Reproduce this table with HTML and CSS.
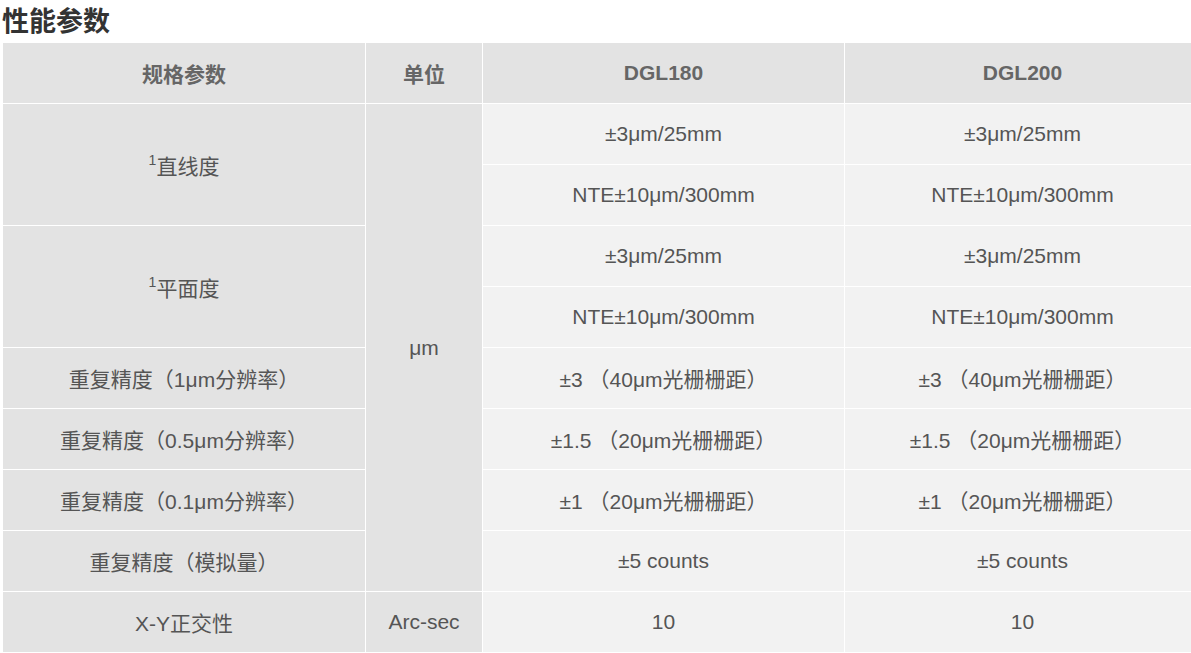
FILE: index.html
```html
<!DOCTYPE html>
<html lang="zh-CN">
<head>
<meta charset="utf-8">
<title>性能参数</title>
<link rel="stylesheet" href="styles.css">
</head>
<body>
<div class="page">
  <h2 class="title">性能参数</h2>
  <table class="spec">
    <colgroup>
      <col class="c1"><col class="c2"><col class="c3"><col class="c4">
    </colgroup>
    <thead>
      <tr><th>规格参数</th><th>单位</th><th>DGL180</th><th>DGL200</th></tr>
    </thead>
    <tbody>
      <tr><td class="lbl" rowspan="2"><sup>1</sup>直线度</td><td class="lbl" rowspan="8">μm</td><td>±3μm/25mm</td><td>±3μm/25mm</td></tr>
      <tr><td>NTE±10μm/300mm</td><td>NTE±10μm/300mm</td></tr>
      <tr><td class="lbl" rowspan="2"><sup>1</sup>平面度</td><td>±3μm/25mm</td><td>±3μm/25mm</td></tr>
      <tr><td>NTE±10μm/300mm</td><td>NTE±10μm/300mm</td></tr>
      <tr><td class="lbl">重复精度（1μm分辨率）</td><td>±3 （40μm光栅栅距）</td><td>±3 （40μm光栅栅距）</td></tr>
      <tr><td class="lbl">重复精度（0.5μm分辨率）</td><td>±1.5 （20μm光栅栅距）</td><td>±1.5 （20μm光栅栅距）</td></tr>
      <tr><td class="lbl">重复精度（0.1μm分辨率）</td><td>±1 （20μm光栅栅距）</td><td>±1 （20μm光栅栅距）</td></tr>
      <tr><td class="lbl">重复精度（模拟量）</td><td>±5 counts</td><td>±5 counts</td></tr>
      <tr><td class="lbl">X-Y正交性</td><td class="lbl">Arc-sec</td><td>10</td><td>10</td></tr>
    </tbody>
  </table>
</div>
</body>
</html>
```

FILE: styles.css
```css
html, body {
  margin: 0;
  padding: 0;
  background: #fff;
}
body {
  font-family: "Liberation Sans", Arial, "Noto Sans CJK SC", sans-serif;
}
.page {
  padding: 0 0 0 2px;
  width: 1200px;
}
.title {
  margin: 0;
  padding-top: 2px;
  font-size: 27px;
  line-height: 41px;
  height: 41px;
  font-weight: bold;
  color: #333;
  font-family: "Liberation Sans", "Noto Sans CJK SC", sans-serif;
}
.spec {
  border-collapse: collapse;
  table-layout: fixed;
  width: 1198px;
  margin-top: -1px;
}
.c1 { width: 363px; }
.c2 { width: 117px; }
.c3 { width: 362px; }
.c4 { width: 356px; }
.spec th,
.spec td {
  border: 1px solid #fff;
  height: 60px;
  padding: 0;
  text-align: center;
  vertical-align: middle;
  font-size: 21px;
  color: #555;
  background: #f2f2f2;
  font-weight: normal;
}
.spec th {
  background: #e3e3e3;
  font-weight: bold;
  color: #666;
}
.spec td.lbl {
  background: #e3e3e3;
}
.spec sup {
  font-size: 14px;
  vertical-align: 9px;
  line-height: 0;
}
```
